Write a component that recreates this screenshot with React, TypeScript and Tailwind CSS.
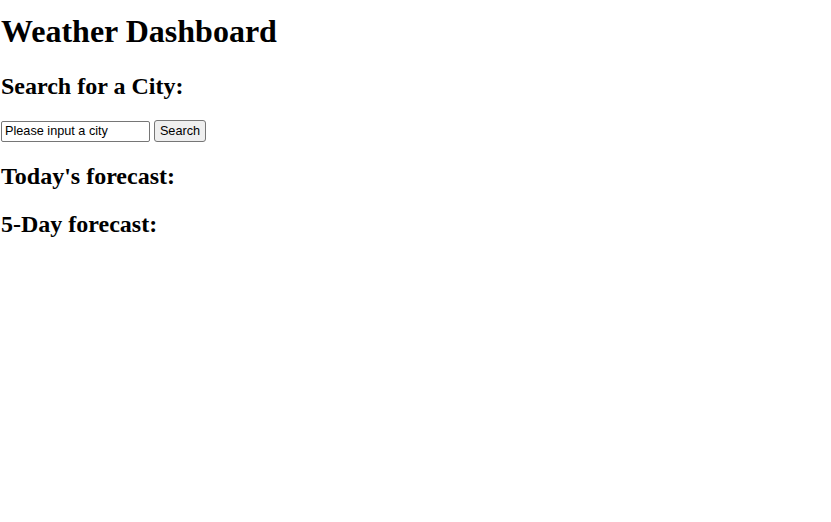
import React, { useState } from 'react';

export default function App() {
    const [city, setCity] = useState('');

    return (
        <div className="min-h-screen bg-white text-black pl-px pt-px" style={{ fontFamily: '"Liberation Serif", serif' }}>
            <h1 className="text-[32px] font-bold leading-[1.15] mt-[12px] mb-[23.5px]">Weather Dashboard</h1>
            <h2 className="text-[24px] font-bold leading-[1.15] mt-0 mb-[19.5px]">Search for a City:</h2>
            <div className="flex items-center gap-[4px] h-[22px]">
                <input
                    type="text"
                    placeholder="Please input a city"
                    value={city}
                    onChange={(e) => setCity(e.target.value)}
                    className="w-[149px] h-[21px] border border-[#767676] rounded-[2px] px-[3px] text-[12.7px] text-black placeholder:text-black outline-none"
                    style={{ fontFamily: '"Liberation Sans", Arial, sans-serif' }}
                />
                <button
                    className="w-[52px] h-[22px] bg-[#efefef] border border-[#767676] rounded-[3px] text-[12.7px] text-black text-center"
                    style={{ fontFamily: '"Liberation Sans", Arial, sans-serif' }}
                >
                    Search
                </button>
            </div>
            <h2 className="text-[24px] font-bold leading-[1.15] mt-[20.5px] mb-[20.5px]">Today's forecast:</h2>
            <h2 className="text-[24px] font-bold leading-[1.15] my-[20.5px]">5-Day forecast:</h2>
        </div>
    );
}
